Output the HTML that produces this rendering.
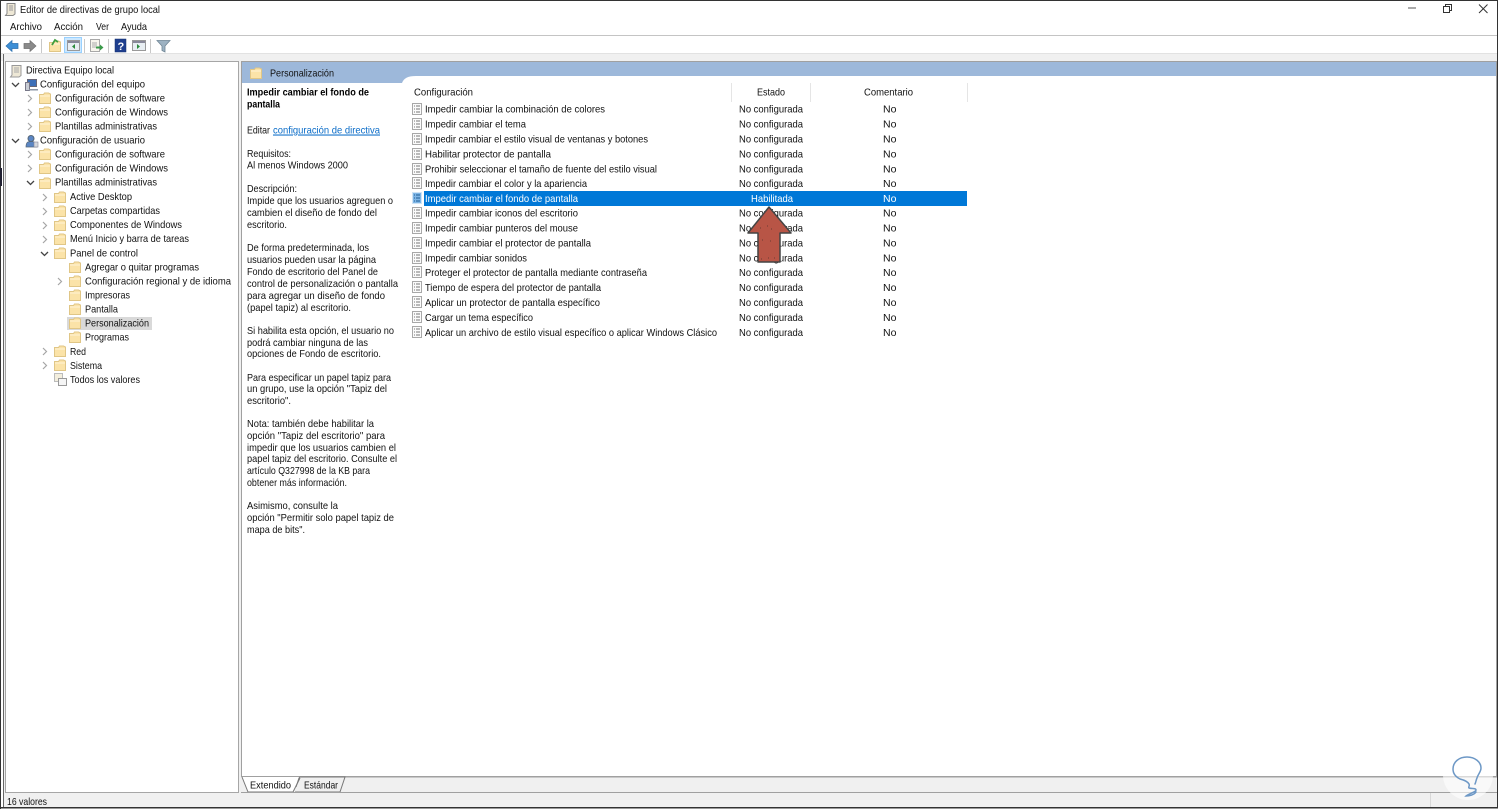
<!DOCTYPE html>
<html lang="es"><head><meta charset="utf-8"><title>Editor de directivas de grupo local</title>
<style>
html,body{margin:0;padding:0;background:#fff;width:1500px;height:809px;overflow:hidden}
svg{display:block;filter:blur(.3px)}
text{font-family:"Liberation Sans",sans-serif;font-size:10.5px;fill:#111}
.w{fill:#fff}.b{font-weight:bold;fill:#000}.l{fill:#0a6cc8;text-decoration:underline}
</style></head><body>
<svg width="1500" height="809" viewBox="0 0 1500 809" xmlns="http://www.w3.org/2000/svg">
<defs>
<g id="f"><path d="M.5 2.500h4l1-1.500h4l2 1v9.500h-11z" fill="#fbe3a8" stroke="#e0c686" stroke-width="1"/><path d="M1 4h10" stroke="#fff3d6" stroke-width="1"/></g>
<g id="d"><rect x=".5" y=".5" width="9" height="11" fill="#fbfbfb" stroke="#a8a8a8"/><path d="M2 3h1M2 6h1M2 9h1M4 3h4M4 6h4M4 9h4" stroke="#777" stroke-width="1"/></g>
<path id="cr" d="M0 0l3.500 3.500L0 7" fill="none" stroke="#a6a6a6" stroke-width="1.200"/>
<path id="cd" d="M0 0l3.500 3.500L7 0" fill="none" stroke="#444" stroke-width="1.300"/>
</defs>

<rect width="1500" height="809" fill="#fff"/>
<!-- chrome -->
<rect x="0" y="53" width="1497" height="8" fill="#f0f0f0"/>
<rect x="0" y="35" width="1497" height="1" fill="#c4c4c4"/>
<rect x="0" y="53" width="1497" height="1" fill="#e2e2e2"/>
<rect x="3" y="54" width="1494" height="753" fill="#f0f0f0"/>
<!-- outer frame -->
<rect x="0" y="0" width="1498" height="1" fill="#333"/>
<rect x="0" y="0" width="1" height="809" fill="#333"/>
<rect x="0" y="168" width="2" height="18" fill="#223"/>
<rect x="3" y="54" width="1" height="754" fill="#666"/>
<rect x="1497" y="0" width="1" height="808" fill="#333"/>
<rect x="0" y="807" width="1498" height="1.500" fill="#333"/>

<!-- title bar -->
<g transform="translate(5,3)"><path d="M2 .5h8v10.500l-2 1.500H.5l1.500-2z" fill="#eee8d6" stroke="#888"/><path d="M4 3h4M4 5h4M4 7h4" stroke="#999"/></g>
<text x="20" y="13" textLength="140" lengthAdjust="spacingAndGlyphs">Editor de directivas de grupo local</text>
<path d="M1408 8h8" stroke="#555" stroke-width="1"/>
<path d="M1443.500 6.500h6v6h-6z M1445.500 6.500v-2h6v6h-2" fill="#fff" stroke="#333"/>
<path d="M1479 4.500l8.500 8.500M1487.500 4.500l-8.500 8.500" stroke="#333" stroke-width="1"/>

<!-- menu -->
<text x="10" y="30" textLength="32" lengthAdjust="spacingAndGlyphs">Archivo</text>
<text x="54" y="30" textLength="29" lengthAdjust="spacingAndGlyphs">Acción</text>
<text x="96" y="30" textLength="13" lengthAdjust="spacingAndGlyphs">Ver</text>
<text x="121" y="30" textLength="26" lengthAdjust="spacingAndGlyphs">Ayuda</text>

<!-- toolbar -->
<path d="M6 46l6-5.500v3h6v5h-6v3z" fill="#3d8fd6" stroke="#2b6fae" stroke-width=".7"/>
<path d="M36 46l-6-5.500v3h-6v5h6v3z" fill="#8a8a8a" stroke="#707070" stroke-width=".7"/>
<rect x="41" y="39" width="1" height="14" fill="#c8c8c8"/>
<use href="#f" x="49" y="40"/>
<path d="M52 45l3-5 3 2" fill="none" stroke="#3f9e3f" stroke-width="1.800"/>
<rect x="64.500" y="37.500" width="17" height="15" fill="#cce8ff" stroke="#99d1ff"/>
<rect x="67.500" y="40.500" width="12" height="10" fill="#e8eef2" stroke="#999"/><rect x="68" y="41" width="11" height="2" fill="#889"/><path d="M75 44v5l-3-2.500z" fill="#2a8a3a"/>
<rect x="84" y="39" width="1" height="14" fill="#c8c8c8"/>
<rect x="90.500" y="39.500" width="9" height="12" fill="#f8f6ee" stroke="#a8a8a8"/><path d="M92 43h5M92 45h5M92 47h5" stroke="#aaa"/><path d="M96 46.500h4v-2l3.500 3-3.500 3v-2h-4z" fill="#3a9a4a"/>
<rect x="108" y="39" width="1" height="14" fill="#c8c8c8"/>
<rect x="115" y="39" width="11" height="13" fill="#1f3f8f" stroke="#12306e" stroke-width=".5"/>
<text x="117.500" y="50" class="b" style="fill:#fff;font-size:11px">?</text>
<rect x="132.500" y="40.500" width="13" height="10" fill="#e8eef2" stroke="#999"/><rect x="133" y="41" width="12" height="2" fill="#889"/><path d="M137 44v5l3-2.500z" fill="#2a8a3a"/>
<rect x="150" y="39" width="1" height="14" fill="#c8c8c8"/>
<path d="M157 40.500h13l-5 5.500v6l-3-1.500v-4.500z" fill="#9db2c2" stroke="#6e8494" stroke-width=".8"/>

<!-- tree pane -->
<rect x="5.500" y="61.500" width="233" height="731" fill="#fff" stroke="#a6a6a6"/>
<g transform="translate(10,65)"><path d="M2 .5h9v10l-2 1.500H.5l1.500-2z" fill="#eee8d6" stroke="#999"/><path d="M4 3h5M4 5h5M4 7h5" stroke="#aaa"/></g>
<text x="26" y="73.500" textLength="88" lengthAdjust="spacingAndGlyphs">Directiva Equipo local</text>

<use href="#cd" x="12" y="83"/>
<g transform="translate(25,79)"><rect x="2.500" y=".5" width="9" height="7" fill="#3c6fb8" stroke="#667"/><rect x=".5" y="3.500" width="4" height="8" fill="#c8ccd4" stroke="#778"/><path d="M4 10h9v1.500H4z" fill="#8b95a5"/></g>
<text x="40" y="87.500" textLength="105" lengthAdjust="spacingAndGlyphs">Configuración del equipo</text>

<use href="#cr" x="28" y="95"/><use href="#f" x="39" y="92"/>
<text x="55" y="101.500" textLength="110" lengthAdjust="spacingAndGlyphs">Configuración de software</text>
<use href="#cr" x="28" y="109"/><use href="#f" x="39" y="106"/>
<text x="55" y="115.500" textLength="113" lengthAdjust="spacingAndGlyphs">Configuración de Windows</text>
<use href="#cr" x="28" y="123"/><use href="#f" x="39" y="120"/>
<text x="55" y="129.500" textLength="102" lengthAdjust="spacingAndGlyphs">Plantillas administrativas</text>

<use href="#cd" x="12" y="139"/>
<g transform="translate(25,135)"><circle cx="6" cy="3.500" r="3" fill="#5b86c4" stroke="#567"/><path d="M1 12c0-5 2-5.500 5-5.500s5 .5 6 5.500z" fill="#5b86c4" stroke="#567" stroke-width=".7"/><rect x="9" y="7" width="4" height="5" fill="#d5d8de" stroke="#889" stroke-width=".6"/></g>
<text x="40" y="143.500" textLength="105" lengthAdjust="spacingAndGlyphs">Configuración de usuario</text>

<use href="#cr" x="28" y="151"/><use href="#f" x="39" y="148"/>
<text x="55" y="157.500" textLength="110" lengthAdjust="spacingAndGlyphs">Configuración de software</text>
<use href="#cr" x="28" y="165"/><use href="#f" x="39" y="162"/>
<text x="55" y="171.500" textLength="113" lengthAdjust="spacingAndGlyphs">Configuración de Windows</text>
<use href="#cd" x="27" y="181"/><use href="#f" x="39" y="177"/>
<text x="55" y="185.500" textLength="102" lengthAdjust="spacingAndGlyphs">Plantillas administrativas</text>

<use href="#cr" x="43" y="194"/><use href="#f" x="54" y="191"/>
<text x="70" y="200" textLength="62" lengthAdjust="spacingAndGlyphs">Active Desktop</text>
<use href="#cr" x="43" y="208"/><use href="#f" x="54" y="205"/>
<text x="70" y="214" textLength="90" lengthAdjust="spacingAndGlyphs">Carpetas compartidas</text>
<use href="#cr" x="43" y="222"/><use href="#f" x="54" y="219"/>
<text x="70" y="228" textLength="112" lengthAdjust="spacingAndGlyphs">Componentes de Windows</text>
<use href="#cr" x="43" y="236"/><use href="#f" x="54" y="233"/>
<text x="70" y="242" textLength="119" lengthAdjust="spacingAndGlyphs">Menú Inicio y barra de tareas</text>
<use href="#cd" x="41" y="252"/><use href="#f" x="54" y="247"/>
<text x="70" y="256.500" textLength="68" lengthAdjust="spacingAndGlyphs">Panel de control</text>

<use href="#f" x="69" y="261"/>
<text x="85" y="270.500" textLength="114" lengthAdjust="spacingAndGlyphs">Agregar o quitar programas</text>
<use href="#cr" x="58" y="278"/><use href="#f" x="69" y="275"/>
<text x="85" y="284.500" textLength="146" lengthAdjust="spacingAndGlyphs">Configuración regional y de idioma</text>
<use href="#f" x="69" y="289"/>
<text x="85" y="298.500" textLength="45" lengthAdjust="spacingAndGlyphs">Impresoras</text>
<use href="#f" x="69" y="303"/>
<text x="85" y="312.500" textLength="33" lengthAdjust="spacingAndGlyphs">Pantalla</text>
<rect x="67" y="317" width="85" height="13" fill="#d9d9d9"/>
<use href="#f" x="69" y="317"/>
<text x="85" y="326.500" textLength="64" lengthAdjust="spacingAndGlyphs">Personalización</text>
<use href="#f" x="69" y="331"/>
<text x="85" y="340.500" textLength="44" lengthAdjust="spacingAndGlyphs">Programas</text>

<use href="#cr" x="43" y="348"/><use href="#f" x="54" y="345"/>
<text x="70" y="355" textLength="16" lengthAdjust="spacingAndGlyphs">Red</text>
<use href="#cr" x="43" y="362"/><use href="#f" x="54" y="359"/>
<text x="70" y="369" textLength="32" lengthAdjust="spacingAndGlyphs">Sistema</text>
<g transform="translate(54,373)"><rect x=".5" y=".5" width="8" height="8" fill="#f3eedd" stroke="#bbb"/><rect x="4.500" y="5.500" width="8" height="7" fill="#f5f5f5" stroke="#999"/></g>
<text x="70" y="383" textLength="70" lengthAdjust="spacingAndGlyphs">Todos los valores</text>

<!-- right pane -->
<rect x="241.500" y="61.500" width="1255" height="715" fill="#fff" stroke="#a0a0a0"/>
<path d="M242 62h1254v14H416c-8 0-12 2-14 7H242z" fill="#9db8da"/>
<use href="#f" x="250" y="67"/>
<text x="270" y="76.500" textLength="64" lengthAdjust="spacingAndGlyphs">Personalización</text>

<!-- description -->
<text x="247" y="95.500" class="b" textLength="122" lengthAdjust="spacingAndGlyphs">Impedir cambiar el fondo de</text>
<text x="247" y="107.500" class="b" textLength="33" lengthAdjust="spacingAndGlyphs">pantalla</text>
<text x="247" y="133.500" textLength="23" lengthAdjust="spacingAndGlyphs">Editar</text>
<text x="273" y="133.500" class="l" textLength="107" lengthAdjust="spacingAndGlyphs">configuración de directiva</text>
<text x="247" y="157" textLength="44" lengthAdjust="spacingAndGlyphs">Requisitos:</text>
<text x="247" y="168.500" textLength="101" lengthAdjust="spacingAndGlyphs">Al menos Windows 2000</text>
<text x="247" y="192" textLength="50" lengthAdjust="spacingAndGlyphs">Descripción:</text>
<text x="247" y="204" textLength="146" lengthAdjust="spacingAndGlyphs">Impide que los usuarios agreguen o</text>
<text x="247" y="216" textLength="130" lengthAdjust="spacingAndGlyphs">cambien el diseño de fondo del</text>
<text x="247" y="228" textLength="40" lengthAdjust="spacingAndGlyphs">escritorio.</text>
<text x="247" y="251" textLength="122" lengthAdjust="spacingAndGlyphs">De forma predeterminada, los</text>
<text x="247" y="263" textLength="129" lengthAdjust="spacingAndGlyphs">usuarios pueden usar la página</text>
<text x="247" y="275" textLength="131" lengthAdjust="spacingAndGlyphs">Fondo de escritorio del Panel de</text>
<text x="247" y="287" textLength="151" lengthAdjust="spacingAndGlyphs">control de personalización o pantalla</text>
<text x="247" y="299" textLength="138" lengthAdjust="spacingAndGlyphs">para agregar un diseño de fondo</text>
<text x="247" y="311" textLength="104" lengthAdjust="spacingAndGlyphs">(papel tapiz) al escritorio.</text>
<text x="247" y="334" textLength="147" lengthAdjust="spacingAndGlyphs">Si habilita esta opción, el usuario no</text>
<text x="247" y="346" textLength="121" lengthAdjust="spacingAndGlyphs">podrá cambiar ninguna de las</text>
<text x="247" y="357" textLength="134" lengthAdjust="spacingAndGlyphs">opciones de Fondo de escritorio.</text>
<text x="247" y="381" textLength="144" lengthAdjust="spacingAndGlyphs">Para especificar un papel tapiz para</text>
<text x="247" y="392" textLength="140" lengthAdjust="spacingAndGlyphs">un grupo, use la opción "Tapiz del</text>
<text x="247" y="404" textLength="44" lengthAdjust="spacingAndGlyphs">escritorio".</text>
<text x="247" y="427" textLength="127" lengthAdjust="spacingAndGlyphs">Nota: también debe habilitar la</text>
<text x="247" y="439" textLength="138" lengthAdjust="spacingAndGlyphs">opción "Tapiz del escritorio" para</text>
<text x="247" y="451" textLength="149" lengthAdjust="spacingAndGlyphs">impedir que los usuarios cambien el</text>
<text x="247" y="462" textLength="150" lengthAdjust="spacingAndGlyphs">papel tapiz del escritorio. Consulte el</text>
<text x="247" y="474" textLength="123" lengthAdjust="spacingAndGlyphs">artículo Q327998 de la KB para</text>
<text x="247" y="486" textLength="100" lengthAdjust="spacingAndGlyphs">obtener más información.</text>
<text x="247" y="509" textLength="91" lengthAdjust="spacingAndGlyphs">Asimismo, consulte la</text>
<text x="247" y="521" textLength="147" lengthAdjust="spacingAndGlyphs">opción "Permitir solo papel tapiz de</text>
<text x="247" y="533" textLength="58" lengthAdjust="spacingAndGlyphs">mapa de bits".</text>

<!-- list header -->
<text x="414" y="95.500" textLength="59" lengthAdjust="spacingAndGlyphs">Configuración</text>
<text x="757" y="95.500" textLength="28" lengthAdjust="spacingAndGlyphs">Estado</text>
<text x="864" y="95.500" textLength="49" lengthAdjust="spacingAndGlyphs">Comentario</text>
<rect x="731" y="83" width="1" height="19" fill="#e5e5e5"/>
<rect x="810" y="83" width="1" height="19" fill="#e5e5e5"/>
<rect x="967" y="83" width="1" height="19" fill="#e5e5e5"/>

<!-- selected row -->
<rect x="424" y="191" width="543" height="15" fill="#0078d7"/>

<!-- rows -->
<use href="#d" x="412" y="103"/><text x="425" y="112.500" textLength="180" lengthAdjust="spacingAndGlyphs">Impedir cambiar la combinación de colores</text><text x="739" y="112.500" textLength="64" lengthAdjust="spacingAndGlyphs">No configurada</text><text x="883" y="112.500">No</text>
<use href="#d" x="412" y="118"/><text x="425" y="127.500" textLength="101" lengthAdjust="spacingAndGlyphs">Impedir cambiar el tema</text><text x="739" y="127.500" textLength="64" lengthAdjust="spacingAndGlyphs">No configurada</text><text x="883" y="127.500">No</text>
<use href="#d" x="412" y="133"/><text x="425" y="142.500" textLength="223" lengthAdjust="spacingAndGlyphs">Impedir cambiar el estilo visual de ventanas y botones</text><text x="739" y="142.500" textLength="64" lengthAdjust="spacingAndGlyphs">No configurada</text><text x="883" y="142.500">No</text>
<use href="#d" x="412" y="148"/><text x="425" y="157.500" textLength="126" lengthAdjust="spacingAndGlyphs">Habilitar protector de pantalla</text><text x="739" y="157.500" textLength="64" lengthAdjust="spacingAndGlyphs">No configurada</text><text x="883" y="157.500">No</text>
<use href="#d" x="412" y="163"/><text x="425" y="172.500" textLength="232" lengthAdjust="spacingAndGlyphs">Prohibir seleccionar el tamaño de fuente del estilo visual</text><text x="739" y="172.500" textLength="64" lengthAdjust="spacingAndGlyphs">No configurada</text><text x="883" y="172.500">No</text>
<use href="#d" x="412" y="177"/><text x="425" y="187" textLength="162" lengthAdjust="spacingAndGlyphs">Impedir cambiar el color y la apariencia</text><text x="739" y="187" textLength="64" lengthAdjust="spacingAndGlyphs">No configurada</text><text x="883" y="187">No</text>
<g transform="translate(412,192)"><rect x=".5" y=".5" width="9" height="11" fill="#7fb6e6" stroke="#d0e4f5"/><path d="M2 3h1M2 6h1M2 9h1M4 3h4M4 6h4M4 9h4" stroke="#1f5f96" stroke-width="1"/></g><text x="425" y="202" class="w" textLength="153" lengthAdjust="spacingAndGlyphs">Impedir cambiar el fondo de pantalla</text><text x="751" y="202" class="w" textLength="42" lengthAdjust="spacingAndGlyphs">Habilitada</text><text x="883" y="202" class="w">No</text>
<use href="#d" x="412" y="207"/><text x="425" y="216.500" textLength="153" lengthAdjust="spacingAndGlyphs">Impedir cambiar iconos del escritorio</text><text x="739" y="216.500" textLength="64" lengthAdjust="spacingAndGlyphs">No configurada</text><text x="883" y="216.500">No</text>
<use href="#d" x="412" y="222"/><text x="425" y="231.500" textLength="153" lengthAdjust="spacingAndGlyphs">Impedir cambiar punteros del mouse</text><text x="739" y="231.500" textLength="64" lengthAdjust="spacingAndGlyphs">No configurada</text><text x="883" y="231.500">No</text>
<use href="#d" x="412" y="237"/><text x="425" y="246.500" textLength="166" lengthAdjust="spacingAndGlyphs">Impedir cambiar el protector de pantalla</text><text x="739" y="246.500" textLength="64" lengthAdjust="spacingAndGlyphs">No configurada</text><text x="883" y="246.500">No</text>
<use href="#d" x="412" y="252"/><text x="425" y="261.500" textLength="102" lengthAdjust="spacingAndGlyphs">Impedir cambiar sonidos</text><text x="739" y="261.500" textLength="64" lengthAdjust="spacingAndGlyphs">No configurada</text><text x="883" y="261.500">No</text>
<use href="#d" x="412" y="266"/><text x="425" y="276" textLength="222" lengthAdjust="spacingAndGlyphs">Proteger el protector de pantalla mediante contraseña</text><text x="739" y="276" textLength="64" lengthAdjust="spacingAndGlyphs">No configurada</text><text x="883" y="276">No</text>
<use href="#d" x="412" y="281"/><text x="425" y="291" textLength="176" lengthAdjust="spacingAndGlyphs">Tiempo de espera del protector de pantalla</text><text x="739" y="291" textLength="64" lengthAdjust="spacingAndGlyphs">No configurada</text><text x="883" y="291">No</text>
<use href="#d" x="412" y="296"/><text x="425" y="306" textLength="175" lengthAdjust="spacingAndGlyphs">Aplicar un protector de pantalla específico</text><text x="739" y="306" textLength="64" lengthAdjust="spacingAndGlyphs">No configurada</text><text x="883" y="306">No</text>
<use href="#d" x="412" y="311"/><text x="425" y="321" textLength="108" lengthAdjust="spacingAndGlyphs">Cargar un tema específico</text><text x="739" y="321" textLength="64" lengthAdjust="spacingAndGlyphs">No configurada</text><text x="883" y="321">No</text>
<use href="#d" x="412" y="326"/><text x="425" y="336" textLength="292" lengthAdjust="spacingAndGlyphs">Aplicar un archivo de estilo visual específico o aplicar Windows Clásico</text><text x="739" y="336" textLength="64" lengthAdjust="spacingAndGlyphs">No configurada</text><text x="883" y="336">No</text>

<!-- red arrow -->
<path d="M769 207L748 233H758V262H780V233H791Z" fill="#b85546" stroke="#444" stroke-width="1.500" stroke-linejoin="round"/>
<path d="M760 228h.8M767 226h.8M771 229h.8M762 240h.8M770 241h.8M761 259h.8M768 258h.8M774 258h.8" stroke="#3a2a28" stroke-width=".8"/>

<!-- tabs -->
<path d="M243 777h1254" stroke="#a0a0a0"/>
<path d="M242 777l6 15h45l7-15z" fill="#fff" stroke="none"/>
<path d="M242 777l6 15h45l7-14" fill="none" stroke="#777"/>
<path d="M296 787l3-9 1-1h45l-5 15h-45" fill="none" stroke="#777"/>
<text x="250" y="788.500" textLength="41" lengthAdjust="spacingAndGlyphs">Extendido</text>
<text x="304" y="788.500" textLength="34" lengthAdjust="spacingAndGlyphs">Estándar</text>

<!-- status bar -->
<rect x="241" y="792" width="1256" height="1" fill="#a0a0a0"/>
<rect x="1430" y="793" width="1" height="14" fill="#d8d8d8"/>
<text x="7" y="805" textLength="40" lengthAdjust="spacingAndGlyphs">16 valores</text>

<!-- watermark -->
<circle cx="1468" cy="775" r="25" fill="#fff" fill-opacity=".6"/>
<path d="M1467 757c-8 0-14 5-14 12 0 5 3 8 7 10 4 1 8 3 9 5 1 2-1 3 0 4 3 1 7 0 7 2s-8 4-10 6c3 0 8-1 10-4M1467 757c8 0 14 5 14 11 0 4-3 6-4 10-1 2-1 4-2 6" fill="none" stroke="#6d98c6" stroke-width="1.500" stroke-linecap="round"/>
</svg>
</body></html>
